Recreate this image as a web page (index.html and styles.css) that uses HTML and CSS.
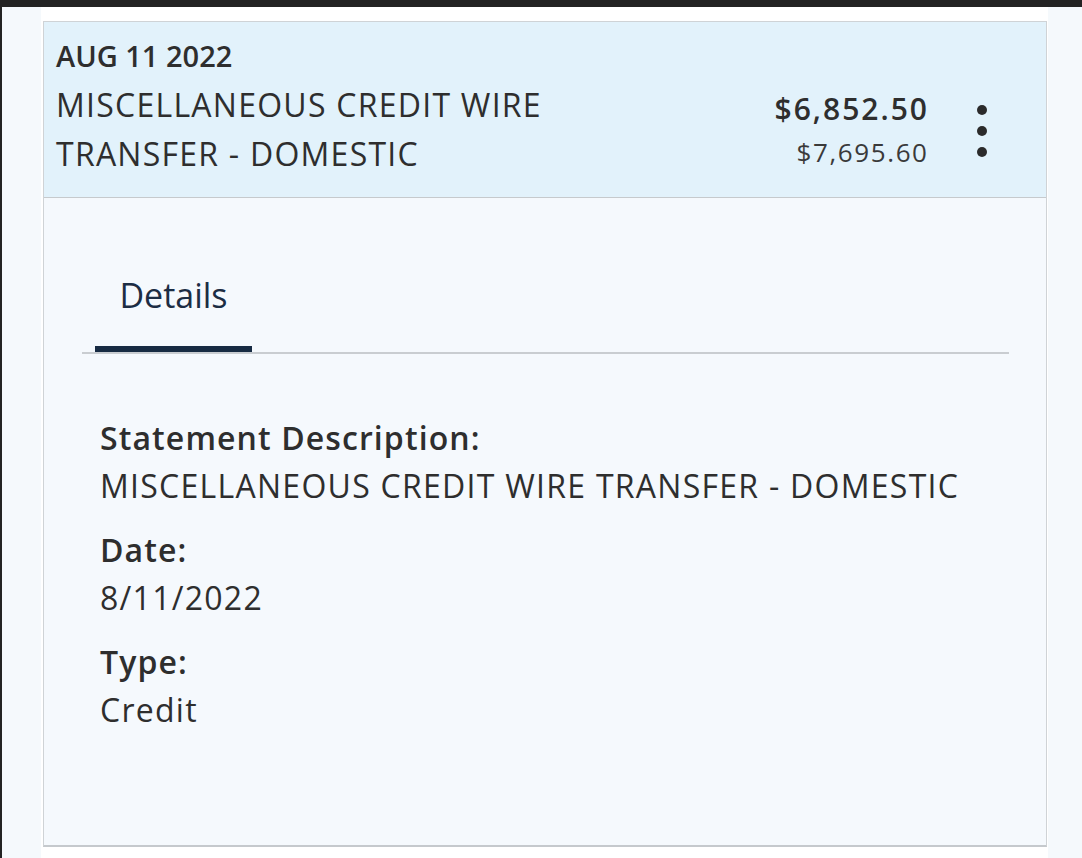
FILE: index.html
```html
<!DOCTYPE html>
<html lang="en">
<head>
  <meta charset="UTF-8">
  <meta name="viewport" content="width=device-width, initial-scale=1.0">
  <title>Transaction Details</title>
  <link rel="stylesheet" href="styles.css">
</head>
<body>
  <div class="page">
    <div class="txn-card">
      <div class="txn-header">
        <div class="txn-date">AUG 11 2022</div>
        <div class="txn-row">
          <div class="txn-desc">MISCELLANEOUS CREDIT WIRE<br>TRANSFER - DOMESTIC</div>
          <div class="txn-amounts">
            <div class="amount">$6,852.50</div>
            <div class="balance">$7,695.60</div>
          </div>
          <div class="kebab">
            <span></span>
            <span></span>
            <span></span>
          </div>
        </div>
      </div>

      <div class="txn-body">
        <div class="tabs">
          <div class="tab active">Details</div>
        </div>

        <div class="fields">
          <div class="field">
            <div class="field-label">Statement Description:</div>
            <div class="field-value">MISCELLANEOUS CREDIT WIRE TRANSFER - DOMESTIC</div>
          </div>
          <div class="field">
            <div class="field-label">Date:</div>
            <div class="field-value">8/11/2022</div>
          </div>
          <div class="field">
            <div class="field-label">Type:</div>
            <div class="field-value">Credit</div>
          </div>
        </div>
      </div>
    </div>
  </div>
</body>
</html>
```

FILE: styles.css
```css
body {
  margin: 0;
  font-family: "Open Sans", Arial, sans-serif;
  color: #2e2e2e;
  background-color: #f5f9fc;
  border-top: 7px solid #232323;
  border-left: 2px solid #232323;
  min-height: 851px;
  box-sizing: border-box;
}

.page {
  margin-left: 39px;
  width: 1007px;
  padding-top: 14px;
  background-color: #fff;
  min-height: 837px;
}

.txn-card {
  margin: 0 1px 0 2px;
  border: 1px solid #cfd3d6;
  border-bottom: 2px solid #c5c9cd;
}

/* Header */
.txn-header {
  background-color: #e2f2fb;
  border-bottom: 1px solid #c6cacd;
  padding: 11px 44px 19px 12px;
}

.txn-date {
  font-size: 29px;
  font-weight: 600;
  line-height: 46px;
}

.txn-row {
  display: flex;
  margin-top: 1px;
}

.txn-desc {
  flex: 1;
  font-size: 32px;
  letter-spacing: 1.25px;
  line-height: 49px;
}

.txn-amounts {
  margin-top: 7px;
  text-align: right;
}

.amount {
  font-size: 30px;
  font-weight: 600;
  letter-spacing: 2px;
  line-height: 44px;
  margin-right: -2px;
}

.balance {
  font-size: 26px;
  letter-spacing: 1.6px;
  line-height: 42px;
  margin-right: -1.6px;
  color: #3a3a3a;
}

.kebab {
  width: 40px;
  margin: 25px 0 0 35px;
  display: flex;
  flex-direction: column;
  align-items: center;
  gap: 11px;
}

.kebab span {
  width: 10px;
  height: 10px;
  border-radius: 50%;
  background-color: #2b2b2b;
}

/* Body */
.txn-body {
  background-color: #f5f9fd;
  padding: 73px 37px 111px 38px;
}

.tabs {
  display: flex;
  border-bottom: 2px solid #c9cdd1;
}

.tab {
  margin-left: 13px;
  width: 157px;
  text-align: center;
  font-size: 34px;
  line-height: 48px;
  padding-bottom: 27px;
  color: #1c2d44;
}

.tab.active {
  border-bottom: 6px solid #172b43;
}

.fields {
  padding: 60px 0 0 18px;
}

.field + .field {
  margin-top: 16px;
}

.field-label {
  font-size: 32px;
  font-weight: 600;
  letter-spacing: 1.1px;
  line-height: 48px;
}

.field-value {
  font-size: 32px;
  letter-spacing: 1.27px;
  line-height: 48px;
}
```
